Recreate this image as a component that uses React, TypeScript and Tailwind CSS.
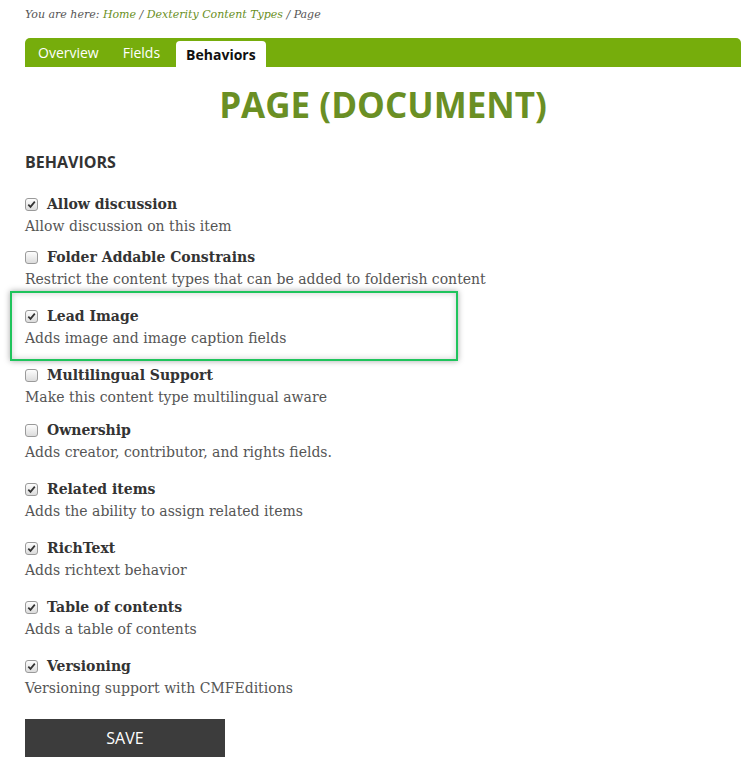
import React from "react";

const serif = { fontFamily: '"DejaVu Serif", "Liberation Serif", serif' };
const sans = { fontFamily: '"Open Sans", "Noto Sans", sans-serif' };

function Check({ checked }: { checked: boolean }) {
  return (
    <span className="inline-flex h-[13px] w-[13px] shrink-0 items-center justify-center rounded-[3px] border border-[#9a9a9a] bg-gradient-to-b from-[#fdfdfd] to-[#dcdcdc]">
      {checked && (
        <svg width="9" height="9" viewBox="0 0 9 9">
          <path d="M1.3 4.6 L3.5 6.9 L7.8 1.6" fill="none" stroke="#333" strokeWidth="1.7" />
        </svg>
      )}
    </span>
  );
}

type Item = { label: string; desc: string; checked: boolean; mt: string; hl?: boolean };

const items: Item[] = [
  { label: "Allow discussion", desc: "Allow discussion on this item", checked: true, mt: "mt-0" },
  { label: "Folder Addable Constrains", desc: "Restrict the content types that can be added to folderish content", checked: false, mt: "mt-[9px]" },
  { label: "Lead Image", desc: "Adds image and image caption fields", checked: true, mt: "mt-[15px]", hl: true },
  { label: "Multilingual Support", desc: "Make this content type multilingual aware", checked: false, mt: "mt-[15px]" },
  { label: "Ownership", desc: "Adds creator, contributor, and rights fields.", checked: false, mt: "mt-[11px]" },
  { label: "Related items", desc: "Adds the ability to assign related items", checked: true, mt: "mt-[15px]" },
  { label: "RichText", desc: "Adds richtext behavior", checked: true, mt: "mt-[15px]" },
  { label: "Table of contents", desc: "Adds a table of contents", checked: true, mt: "mt-[15px]" },
  { label: "Versioning", desc: "Versioning support with CMFEditions", checked: true, mt: "mt-[15px]" },
];

export default function App() {
  return (
    <div className="relative min-h-[781px] w-[745px] bg-white pl-[25px] pr-[4px] text-[#333]">
      <div className="pt-[6px] text-[11px] italic leading-[18px] text-[#555]" style={serif}>
        You are here: <span className="text-[#6a8f24]">Home</span> / <span className="text-[#6a8f24]">Dexterity Content Types</span> / Page
      </div>
      <div className="mt-[14px] flex h-[29px] items-end rounded-t-[5px] bg-[#76ad0c] pl-[1px]" style={sans}>
        <div className="px-[12px] pb-[5px] text-[14px] leading-[19px] text-white">Overview</div>
        <div className="px-[12px] pb-[5px] text-[14px] leading-[19px] text-white">Fields</div>
        <div className="ml-[4px] flex h-[26px] items-center rounded-t-[4px] bg-white px-[10px] pt-[1px] text-[14px] font-bold text-[#111]">Behaviors</div>
      </div>
      <h1 className="mt-[18px] text-center text-[35px] font-bold leading-[40px] text-[#6a8f24]" style={sans}>
        PAGE (DOCUMENT)
      </h1>
      <h2 className="mt-[26px] text-[16px] font-bold leading-[22px] text-[#333]" style={sans}>
        BEHAVIORS
      </h2>
      <div className="mt-[20px]" style={serif}>
        {items.map((it) => (
          <div key={it.label} className={`relative ${it.mt}`}>
            {it.hl && (
              <div className="pointer-events-none absolute left-[-15px] top-[-14px] h-[70px] w-[448px] border-2 border-[#1fc45c] shadow-[0_0_6px_rgba(0,0,0,0.35),inset_0_0_6px_rgba(0,0,0,0.2)]" />
            )}
            <div className="flex items-center gap-[9px]">
              <Check checked={it.checked} />
              <span className="text-[14px] font-bold leading-[22px] text-[#333]">{it.label}</span>
            </div>
            <div className="text-[14px] leading-[22px] text-[#555]">{it.desc}</div>
          </div>
        ))}
      </div>
      <button className="mt-[20px] flex h-[38px] w-[200px] items-center justify-center bg-[#3c3c3c] text-[16px] text-white" style={sans}>
        SAVE
      </button>
    </div>
  );
}
